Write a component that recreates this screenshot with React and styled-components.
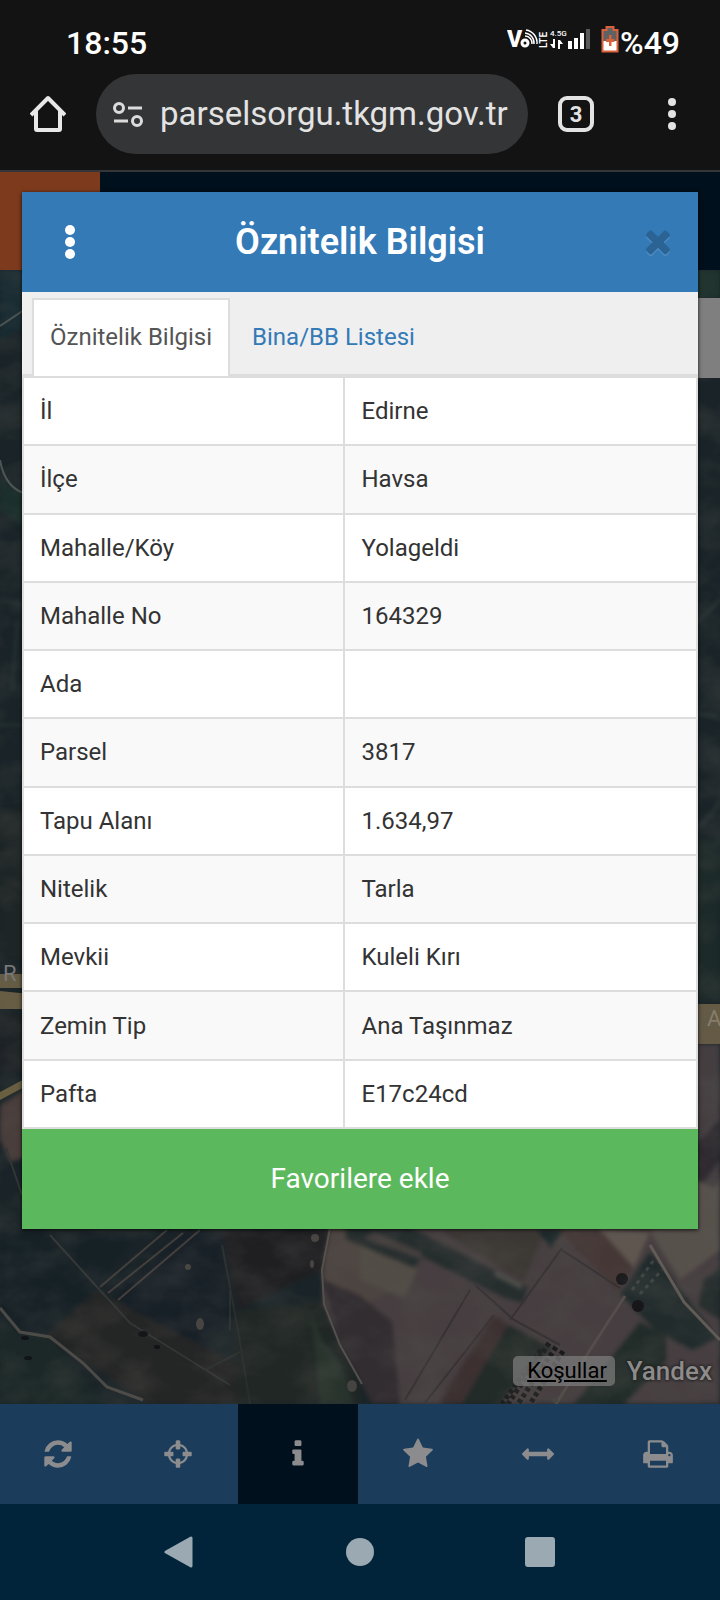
import React, { useState } from 'react';
import styled, { createGlobalStyle } from 'styled-components';

const GlobalStyle = createGlobalStyle`
  * {
    box-sizing: border-box;
  }

  body {
    margin: 0;
    background-color: #131313;
    font-family: Roboto, "Noto Sans", sans-serif;
  }

  button {
    border: none;
    padding: 0;
    background: none;
    font-family: inherit;
    cursor: pointer;
  }
`;

const Screen = styled.div`
  display: flex;
  flex-direction: column;
  min-height: 100vh;
`;

const StatusBar = styled.header`
  display: flex;
  justify-content: space-between;
  padding: 24px 40px 0 66px;
  height: 74px;
  color: #fff;
  font-size: 32px;
  font-weight: 500;
  line-height: 38px;
`;

const StatusIcons = styled.div`
  display: flex;
  align-items: flex-start;
`;

const AddressBar = styled.div`
  display: flex;
  align-items: center;
  padding-bottom: 16px;
  border-bottom: 2px solid #353638;
`;

const BrowserButton = styled.button`
  display: flex;
  align-items: center;
  justify-content: center;
  width: 96px;
  height: 80px;
`;

const AddressPill = styled.label`
  display: flex;
  flex: 1;
  align-items: center;
  gap: 16px;
  min-width: 0;
  height: 80px;
  padding: 0 14px 0 16px;
  border-radius: 40px;
  background-color: #343537;
`;

const AddressInput = styled.input`
  flex: 1;
  min-width: 0;
  padding: 0;
  border: none;
  outline: none;
  background: none;
  color: #e3e3e3;
  font-family: inherit;
  font-size: 33px;
  line-height: 40px;
`;

const TabCount = styled.span`
  display: flex;
  align-items: center;
  justify-content: center;
  width: 36px;
  height: 36px;
  border: 4px solid #e3e3e3;
  border-radius: 9px;
  color: #e3e3e3;
  font-size: 22px;
  font-weight: 700;
`;

const Page = styled.main`
  display: grid;
  flex: 1;
  overflow: hidden;

  > * {
    grid-area: 1 / 1;
    min-width: 0;
  }
`;

const MapPage = styled.div`
  display: flex;
  flex-direction: column;
`;

const SiteHeader = styled.div`
  display: flex;
  height: 98px;
  background-color: #00101c;
`;

const SiteBadge = styled.div`
  width: 100px;
  background-color: #7e3a1c;
`;

const MapArea = styled.div`
  position: relative;
  display: flex;
  flex: 1;
  flex-direction: column;
  align-items: flex-end;
  justify-content: space-between;
  padding-top: 28px;
`;

const MapDrawing = styled.svg`
  position: absolute;
  inset: 0;
  width: 100%;
  height: 100%;
`;

const MapPanel = styled.div`
  position: relative;
  width: 80px;
  height: 80px;
  background-color: #7f7f7f;
`;

const MapCredits = styled.div`
  position: relative;
  display: flex;
  align-items: center;
  gap: 12px;
  padding: 0 8px 18px 0;
`;

const TermsLink = styled.a`
  padding: 0 8px 0 14px;
  border-radius: 5px;
  background-color: rgba(127, 127, 127, 0.7);
  color: #000;
  font-size: 22px;
  line-height: 30px;
  text-decoration: underline;
`;

const MapBrand = styled.span`
  color: #8d8b8b;
  font-size: 26px;
  font-weight: 500;
  line-height: 30px;
  text-shadow: 0 0 3px #1c1c1c, 0 0 3px #1c1c1c;
`;

const Toolbar = styled.nav`
  display: flex;
  margin-left: -2px;
  padding-right: 2px;
  background-color: #1b3d5b;
`;

const ToolButton = styled.button`
  display: flex;
  flex: 1;
  align-items: center;
  justify-content: center;
  height: 100px;
  background-color: ${(props) => (props.$active ? '#00101c' : 'transparent')};
  color: #8c8c8e;
`;

const ModalLayer = styled.div`
  position: relative;
  padding: 20px 22px;
`;

const Modal = styled.section`
  background-color: #fff;
  box-shadow: 0 1px 4px rgba(0, 0, 0, 0.8);
`;

const ModalHeader = styled.div`
  display: flex;
  align-items: center;
  justify-content: space-between;
  height: 100px;
  padding-right: 4px;
  background-color: #337ab7;
`;

const ModalButton = styled.button`
  display: flex;
  align-items: center;
  justify-content: center;
  width: 96px;
  height: 100px;
`;

const CloseButton = styled(ModalButton)`
  width: 72px;
  padding-bottom: 2px;
  color: #2a6394;
  filter: drop-shadow(0 2px 0 #4b8ac1);
`;

const ModalTitle = styled.h2`
  flex: 1;
  margin: 0;
  padding-right: 20px;
  color: #fff;
  font-size: 36px;
  font-weight: 600;
  line-height: 42px;
  text-align: center;
`;

const Tabs = styled.div`
  display: flex;
  gap: 4px;
  padding: 6px 10px 0;
  border-bottom: 2px solid #ddd;
  background-color: #efefef;
`;

const Tab = styled.button`
  height: 78px;
  margin-bottom: -2px;
  padding: 0 16px 2px;
  border: 2px solid ${(props) => (props.$active ? '#ddd' : 'transparent')};
  border-bottom: none;
  background-color: ${(props) => (props.$active ? '#fff' : 'transparent')};
  color: ${(props) => (props.$active ? '#555' : '#337ab7')};
  font-size: 24px;
  line-height: 34px;
`;

const InfoTable = styled.table`
  width: 100%;
  height: 753px;
  border-collapse: collapse;
  table-layout: fixed;
  color: #333;
  font-size: 24px;
  line-height: 34px;
`;

const InfoRow = styled.tr`
  &:nth-child(even) {
    background-color: #f9f9f9;
  }
`;

const InfoLabel = styled.th`
  width: 47.7%;
  padding: 16px;
  border: 2px solid #ddd;
  font-weight: 400;
  text-align: left;
`;

const InfoValue = styled.td`
  padding: 16px;
  border: 2px solid #ddd;
`;

const FavoriteButton = styled.button`
  display: block;
  width: 100%;
  height: 100px;
  background-color: #5cb85c;
  color: #fff;
  font-size: 28px;
  line-height: 40px;
`;

const SystemNav = styled.nav`
  display: flex;
  height: 96px;
  padding: 0 90px;
  background-color: #01243a;
`;

const SystemButton = styled.button`
  display: flex;
  flex: 1;
  align-items: center;
  justify-content: center;
`;

const icons = {
  refresh:
    'M1639 1056q0 5-1 7-64 268-268 434.500t-478 166.500q-146 0-282.500-55t-243.500-157l-129 129q-19 19-45 19t-45-19-19-45v-448q0-26 19-45t45-19h448q26 0 45 19t19 45-19 45l-137 137q71 66 161 102t187 36q134 0 250-65t186-179q11-17 53-117 8-23 30-23h192q13 0 22.500 9.500t9.500 22.500zm25-800v448q0 26-19 45t-45 19h-448q-26 0-45-19t-19-45 19-45l138-138q-148-137-349-137-134 0-250 65t-186 179q-11 17-53 117-8 23-30 23h-199q-13 0-22.500-9.500t-9.500-22.500v-7q65-268 270-434.500t480-166.500q146 0 284 55.500t245 156.500l130-129q19-19 45-19t45 19 19 45z',
  crosshairs:
    'M1325 1024h-109q-26 0-45-19t-19-45v-128q0-26 19-45t45-19h109q-32-108-112.500-188.500t-188.500-112.500v109q0 26-19 45t-45 19h-128q-26 0-45-19t-19-45v-109q-108 32-188.500 112.500t-112.500 188.500h109q26 0 45 19t19 45v128q0 26-19 45t-45 19h-109q32 108 112.500 188.500t188.500 112.500v-109q0-26 19-45t45-19h128q26 0 45 19t19 45v109q108-32 188.500-112.500t112.500-188.500zm339-192v128q0 26-19 45t-45 19h-143q-37 161-154.500 278.500t-278.500 154.500v143q0 26-19 45t-45 19h-128q-26 0-45-19t-19-45v-143q-161-37-278.500-154.500t-154.500-278.500h-143q-26 0-45-19t-19-45v-128q0-26 19-45t45-19h143q37-161 154.500-278.500t278.500-154.500v-143q0-26 19-45t45-19h128q26 0 45 19t19 45v143q161 37 278.500 154.500t154.500 278.500h143q26 0 45 19t19 45z',
  info:
    'M1216 1344v128q0 26-19 45t-45 19h-512q-26 0-45-19t-19-45v-128q0-26 19-45t45-19h64v-384h-64q-26 0-45-19t-19-45v-128q0-26 19-45t45-19h384q26 0 45 19t19 45v576h64q26 0 45 19t19 45zm-128-1152v192q0 26-19 45t-45 19h-256q-26 0-45-19t-19-45v-192q0-26 19-45t45-19h256q26 0 45 19t19 45z',
  star:
    'M1728 647q0 22-26 48l-363 354 86 500q1 7 1 20 0 21-10.500 35.500t-30.500 14.500q-19 0-40-12l-449-236-449 236q-22 12-40 12-21 0-31.500-14.500t-10.500-35.500q0-6 2-20l86-500-364-354q-25-27-25-48 0-37 56-46l502-73 225-455q19-41 49-41t49 41l225 455 502 73q56 9 56 46z',
  arrows:
    'M1792 896q0 26-19 45l-256 256q-19 19-45 19t-45-19-19-45v-128h-1024v128q0 26-19 45t-45 19-45-19l-256-256q-19-19-19-45t19-45l256-256q19-19 45-19t45 19 19 45v128h1024v-128q0-26 19-45t45-19 45 19l256 256q19 19 19 45z',
  print:
    'M448 1536h896v-256h-896v256zm0-640h896v-384h-160q-40 0-68-28t-28-68v-160h-640v640zm1152 64q0-26-19-45t-45-19-45 19-19 45 19 45 45 19 45-19 19-45zm128 0v416q0 13-9.500 22.500t-22.500 9.500h-224v160q0 40-28 68t-68 28h-960q-40 0-68-28t-28-68v-160h-224q-13 0-22.500-9.500t-9.500-22.500v-416q0-79 56.500-135.500t135.500-56.500h64v-544q0-40 28-68t68-28h672q40 0 88 20t76 48l152 152q28 28 48 76t20 88v256h64q79 0 135.500 56.500t56.500 135.500z',
  times:
    'M1490 1322q0 40-28 68l-136 136q-28 28-68 28t-68-28l-294-294-294 294q-28 28-68 28t-68-28l-136-136q-28-28-28-68t28-68l294-294-294-294q-28-28-28-68t28-68l136-136q28-28 68-28t68 28l294 294 294-294q28-28 68-28t68 28l136 136q28 28 28 68t-28 68l-294 294 294 294q28 28 28 68z',
};

const tools = [
  { icon: 'refresh', label: 'Yenile' },
  { icon: 'crosshairs', label: 'Konum' },
  { icon: 'info', label: 'Bilgi' },
  { icon: 'star', label: 'Favoriler' },
  { icon: 'arrows', label: 'Ölçüm' },
  { icon: 'print', label: 'Yazdır' },
];

const rows = [
  ['İl', 'Edirne'],
  ['İlçe', 'Havsa'],
  ['Mahalle/Köy', 'Yolageldi'],
  ['Mahalle No', '164329'],
  ['Ada', ''],
  ['Parsel', '3817'],
  ['Tapu Alanı', '1.634,97'],
  ['Nitelik', 'Tarla'],
  ['Mevkii', 'Kuleli Kırı'],
  ['Zemin Tip', 'Ana Taşınmaz'],
  ['Pafta', 'E17c24cd'],
];

const Icon = ({ name, size = 32 }) => (
  <svg width={size} height={size} viewBox="0 0 1792 1792" fill="currentColor" aria-hidden="true">
    <path d={icons[name]} />
  </svg>
);

const Dots = ({ color, radius }) => (
  <svg width="12" height="36" viewBox="0 0 12 36" fill={color} aria-hidden="true">
    <circle cx="6" cy="6" r={radius} />
    <circle cx="6" cy="18" r={radius} />
    <circle cx="6" cy="30" r={radius} />
  </svg>
);

const SignalIcons = () => (
  <svg width="94" height="38" viewBox="0 0 94 38" fill="#fff" aria-hidden="true">
    <text x="0" y="23" fontSize="23" fontWeight="900">V</text>
    <g fill="none" stroke="#fff">
      <circle cx="18" cy="19" r="3" strokeWidth="3" />
      <path d="M18 12a7 7 0 0 1 7 8M18 9a10 10 0 0 1 9 11M19 6a13 13 0 0 1 11 14" strokeWidth="1.500" />
    </g>
    <text x="-24" y="40" fontSize="10" fontWeight="600" transform="rotate(-90)">LTE</text>
    <text x="43" y="12" fontSize="8" fontWeight="500">4.5G</text>
    <path d="M46 15h2v9h-2l-3-4h3zM51 25v-9h2l3 4h-3v5z" />
    <path d="M61 17h4v8h-4zM67 14h4v11h-4zM73 9h4v16h-4z" />
    <path d="M79 5h4v20h-4z" fill="#58595b" />
  </svg>
);

const BatteryIcon = () => (
  <svg width="19" height="38" viewBox="0 0 19 38" aria-hidden="true">
    <path d="M1.500 5h4V3h7v2h4v22.500h-15z" fill="#5f6163" />
    <path d="M1.500 17h15v10.500h-15z" fill="#fff" />
    <path d="M1.500 6h4V3h7v3h4v21.500h-15z" fill="none" stroke="#d9623c" strokeWidth="2" />
    <path d="M8 11h2.500v4h3v3h-3v4H8v-4H5v-3h3z" fill="#d9623c" />
  </svg>
);

const HomeIcon = () => (
  <svg width="36" height="38" viewBox="0 0 36 38" fill="none" stroke="#e8e8e8" strokeWidth="4" aria-hidden="true">
    <path d="M1 20 18 3l17 17" strokeLinejoin="round" />
    <path d="M6 16v18q0 1 1 1h22q1 0 1-1V16" />
  </svg>
);

const SettingsIcon = () => (
  <svg width="32" height="28" viewBox="0 0 32 28" fill="none" stroke="#dcdcdc" strokeWidth="3" aria-hidden="true">
    <circle cx="7" cy="8" r="4.500" />
    <circle cx="25" cy="21" r="4.500" />
    <path d="M16 8h14M2 21h14" />
  </svg>
);

const Satellite = () => (
  <MapDrawing viewBox="0 0 720 1134" preserveAspectRatio="xMidYMax slice" aria-hidden="true">
    <defs>
      <filter id="soft" x="0" y="0" width="100%" height="100%" colorInterpolationFilters="sRGB">
        <feGaussianBlur stdDeviation="2" />
      </filter>
      <filter id="fine" x="0" y="0" width="100%" height="100%" colorInterpolationFilters="sRGB">
        <feGaussianBlur stdDeviation="0.700" />
      </filter>
      <filter id="grain" x="0" y="0" width="100%" height="100%" colorInterpolationFilters="sRGB">
        <feTurbulence type="fractalNoise" baseFrequency="0.020 0.030" numOctaves="4" seed="8" />
        <feColorMatrix values="0 0 0 0 0.350  0 0 0 0 0.340  0 0 0 0 0.320  1.200 0 0 0 -0.450" />
      </filter>
    </defs>
    <rect width="720" height="1134" fill="#1a2428" />
    <g filter="url(#soft)">
      {/* strips on both sides */}
      <path d="M0 0h40v50L0 70z" fill="#172b32" />
      <path d="M690 0h30v28h-30z" fill="#21342f" />
      <path d="M0 205q16 24 32 14v45L0 240z" fill="#1b2f2c" />
      <path d="M0 330 30 336M18 350 12 420M0 455h30" stroke="#2a3839" strokeWidth="2" />
      <path d="M0 540h40v150H0z" fill="#1e2526" />
      <path d="M690 355q16-8 30-26M690 445q15-2 30 4M690 562q18-10 30-30" stroke="#343d3d" strokeWidth="2" fill="none" />
      <path d="M690 570h30v160h-30z" fill="#1c2a29" />
      <path d="M0 743h30v60H0z" fill="#1a2024" />
      <path d="M0 836 30 816v70L10 892 0 870z" fill="#493e3b" />
      <path d="M690 774h30v200h-30z" fill="#443e41" />
      <path d="M690 880 720 850v40l-30 40z" fill="#2e2a30" />
      <path d="M690 955 720 910v45l-30 30z" fill="#5a534e" />
      {/* dark fields, left */}
      <path d="M0 930 50 960 140 960 97 1017 45 1064 20 1060 0 1038z" fill="#162126" />
      <path d="M183 963h45l4 90-60 50-75-60z" fill="#172027" />
      <path d="M45 1066 97 1020l150 80v34H150z" fill="#242525" />
      <path d="M0 1050 20 1064 50 1068 105 1134H0z" fill="#1c2828" />
      <path d="M222 960h108l-8 40-84 40z" fill="#1f1f22" />
      <path d="M236 1040 324 1032 360 1120v14H236z" fill="#202725" />
      <path d="M310 1040q14 40 30 50l14 44h-34z" fill="#27332c" />
      {/* ploughed fields, right */}
      <path d="M330 955 322 1000 323 1033 340 1073 362 1112 374 1134H720V955z" fill="#463e40" />
      <path d="M330 958h36l25 64-30 14-38-28z" fill="#4c4440" />
      <path d="M323 1010 360 1026 392 1052 400 1134H372L340 1073z" fill="#322d31" />
      <path d="M360 976 418 1000 404 1028 360 1010z" fill="#514c45" />
      <path d="M345 955h60l122 62-4 16-20-6-80-40-9 10-68-28z" fill="#252d2d" />
      <path d="M375 962 422 982v8l-60-22z" fill="#443f3e" />
      <path d="M440 960h105l-22 52z" fill="#3b3834" />
      <path d="M537 960h26l-12 18z" fill="#1b2829" />
      <path d="M495 1000 522 1014v6l-28-14z" fill="#4d4e49" />
      <path d="M560 962h50l22 35-14 24z" fill="#453735" />
      <path d="M598 958 650 962 634 998z" fill="#5f5650" />
      <path d="M650 962 696 910l24 10v60l-40 30z" fill="#57514c" />
      <path d="M508 1055 552 1078 500 1134H462z" fill="#222b28" />
      <path d="M494 1045 508 1055 462 1134H438z" fill="#3c3031" />
      <path d="M620 1024 650 982 664 998 718 1068 692 1080 655 1060z" fill="#212b2c" />
      <path d="M640 1052 666 1066v24l-42 44h-50z" fill="#212c29" />
      <path d="M704 1010 720 998v52l-22-14z" fill="#252d2d" />
    </g>
    <g filter="url(#fine)">
      {/* roads and field borders */}
      <path d="M0 56 30 36" stroke="#4d5556" strokeWidth="2" />
      <path d="M0 190q5 30 30 35" stroke="#4b5754" strokeWidth="2" fill="none" />
      <path d="M0 704h30v14H0zM0 721l30 3v15H0z" fill="#675d44" />
      <path d="M0 822 30 806v8L0 830z" fill="#6b603f" />
      <path d="M690 734h30v40h-30z" fill="#655b45" />
      <path d="M6 878 22 925M50 965 97 1017 130 1053 230 1115" stroke="#333636" strokeWidth="2" fill="none" />
      <path d="M183 963 108 1023M167 960 100 1017M200 960 118 1030" stroke="#443f3c" strokeWidth="2" />
      <path d="M0 1038 20 1062 50 1067 83 1093 107 1117 143 1130" stroke="#4c4a46" strokeWidth="3" fill="none" />
      <path d="M230 1020v40M222 975 238 1060 250 1134M205 1100 240 1082" stroke="#292e2d" strokeWidth="2" fill="none" />
      <path d="M330 958 322 1000 324 1034 340 1075 362 1114" stroke="#55504d" strokeWidth="2" fill="none" />
      <path d="M494 1045 424 1134M470 1020 405 1130M475 1015 514 1050 560 1075M562 978 510 1050M562 980 620 1018" stroke="#363234" strokeWidth="2" fill="none" />
      <path d="M625 1026 590 1080 556 1134" stroke="#544d4b" strokeWidth="3" fill="none" />
      <path d="M650 975 684 1032 720 1070" stroke="#625c57" strokeWidth="3" fill="none" />
      <circle cx="622" cy="1009" r="6" fill="#161519" />
      <circle cx="638" cy="1036" r="6" fill="#161519" />
      <g fill="#101317">
        <ellipse cx="143" cy="1064" rx="5" ry="3" />
        <ellipse cx="157" cy="1077" rx="3" ry="2" />
        <ellipse cx="25" cy="1068" rx="4" ry="2" />
        <ellipse cx="28" cy="1088" rx="4" ry="2" />
      </g>
      <g fill="#464440">
        <ellipse cx="200" cy="1054" rx="4" ry="6" />
        <ellipse cx="188" cy="997" rx="3" ry="3" />
        <ellipse cx="315" cy="968" rx="4" ry="4" />
        <ellipse cx="312" cy="994" rx="2" ry="4" />
        <ellipse cx="352" cy="1116" rx="5" ry="6" />
        <ellipse cx="555" cy="1130" rx="3" ry="3" />
      </g>
      <path
        d="M549 1073 508 1134M556 1077 518 1134M563 1081 530 1134M541 1080 502 1134"
        fill="none"
        stroke="#17191b"
        strokeWidth="5"
        strokeDasharray="4 3"
      />
      <path d="M632 1020 654 990M640 1024 662 1000" stroke="#3f4441" strokeWidth="3" strokeDasharray="4 4" />
    </g>
    <rect width="720" height="1134" filter="url(#grain)" opacity="0.500" />
    <text x="3" y="711" fill="#77777a" fontSize="22">R</text>
    <text x="707" y="756" fill="#857d6b" fontSize="22">A</text>
  </MapDrawing>
);

const App = () => {
  const [address, setAddress] = useState('parselsorgu.tkgm.gov.tr');
  const [tab, setTab] = useState('info');
  const [tool, setTool] = useState('info');

  return (
    <Screen>
      <GlobalStyle />
      <StatusBar>
        <span>18:55</span>
        <StatusIcons>
          <SignalIcons />
          <BatteryIcon />
          <span>%49</span>
        </StatusIcons>
      </StatusBar>

      <AddressBar>
        <BrowserButton aria-label="Ana sayfa">
          <HomeIcon />
        </BrowserButton>
        <AddressPill>
          <SettingsIcon />
          <AddressInput
            type="text"
            aria-label="Adres"
            value={address}
            onChange={(e) => setAddress(e.target.value)}
          />
        </AddressPill>
        <BrowserButton aria-label="Sekmeler">
          <TabCount>3</TabCount>
        </BrowserButton>
        <BrowserButton aria-label="Menü">
          <Dots color="#e3e3e3" radius="4" />
        </BrowserButton>
      </AddressBar>

      <Page>
        <MapPage>
          <SiteHeader>
            <SiteBadge />
          </SiteHeader>
          <MapArea>
            <Satellite />
            <MapPanel />
            <MapCredits>
              <TermsLink href="#kosullar">Koşullar</TermsLink>
              <MapBrand>Yandex</MapBrand>
            </MapCredits>
          </MapArea>
          <Toolbar>
            {tools.map(({ icon, label }) => (
              <ToolButton
                key={icon}
                $active={tool === icon}
                aria-label={label}
                onClick={() => setTool(icon)}
              >
                <Icon name={icon} />
              </ToolButton>
            ))}
          </Toolbar>
        </MapPage>

        <ModalLayer>
          <Modal>
            <ModalHeader>
              <ModalButton aria-label="Seçenekler">
                <Dots color="#fff" radius="5" />
              </ModalButton>
              <ModalTitle>Öznitelik Bilgisi</ModalTitle>
              <CloseButton aria-label="Kapat">
                <Icon name="times" size={36} />
              </CloseButton>
            </ModalHeader>
            <Tabs role="tablist">
              <Tab role="tab" aria-selected={tab === 'info'} $active={tab === 'info'} onClick={() => setTab('info')}>
                Öznitelik Bilgisi
              </Tab>
              <Tab role="tab" aria-selected={tab === 'list'} $active={tab === 'list'} onClick={() => setTab('list')}>
                Bina/BB Listesi
              </Tab>
            </Tabs>
            <InfoTable>
              <tbody>
                {rows.map(([label, value]) => (
                  <InfoRow key={label}>
                    <InfoLabel scope="row">{label}</InfoLabel>
                    <InfoValue>{value}</InfoValue>
                  </InfoRow>
                ))}
              </tbody>
            </InfoTable>
            <FavoriteButton>Favorilere ekle</FavoriteButton>
          </Modal>
        </ModalLayer>
      </Page>

      <SystemNav>
        <SystemButton aria-label="Geri">
          <svg width="32" height="32" viewBox="0 0 32 32" fill="#9ba9b3" stroke="#9ba9b3" strokeWidth="3" strokeLinejoin="round" aria-hidden="true">
            <path d="M2 16 27 2v28z" />
          </svg>
        </SystemButton>
        <SystemButton aria-label="Ana ekran">
          <svg width="28" height="28" viewBox="0 0 28 28" fill="#9ba9b3" aria-hidden="true">
            <circle cx="14" cy="14" r="14" />
          </svg>
        </SystemButton>
        <SystemButton aria-label="Son uygulamalar">
          <svg width="30" height="30" viewBox="0 0 30 30" fill="#9ba9b3" aria-hidden="true">
            <rect width="30" height="30" rx="3" />
          </svg>
        </SystemButton>
      </SystemNav>
    </Screen>
  );
};

export default App;
